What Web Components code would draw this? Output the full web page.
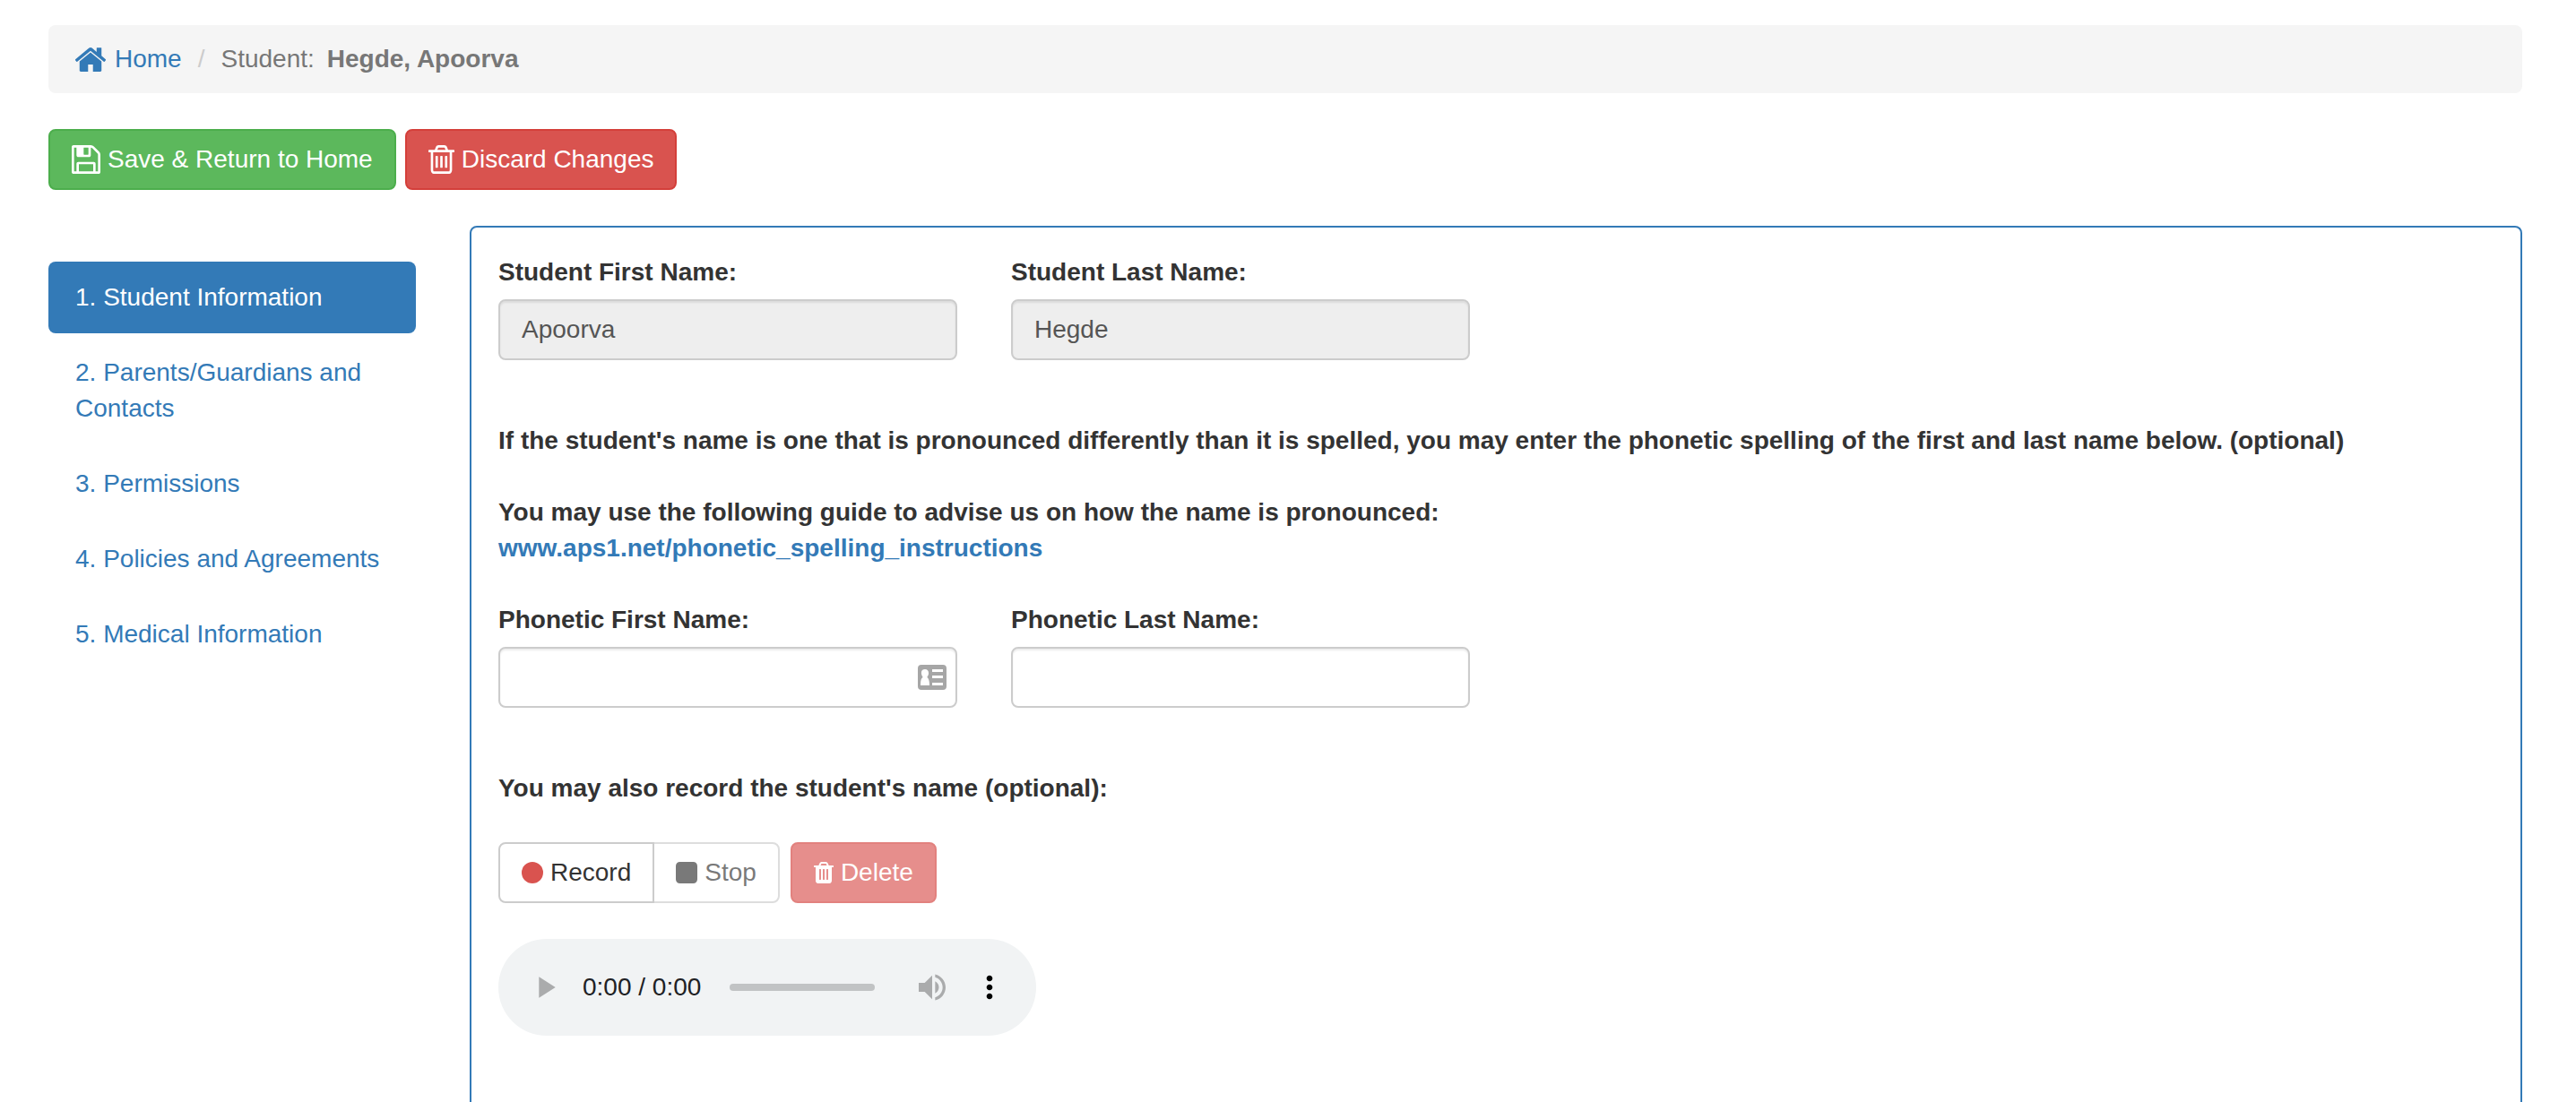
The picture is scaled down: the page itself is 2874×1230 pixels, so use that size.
<!DOCTYPE html>
<html lang="en">
<head>
<meta charset="utf-8">
<meta name="viewport" content="width=device-width, initial-scale=1">
<title>Student Information</title>
<style>
  body {
    margin: 0;
    background: #fff;
    color: #333;
    font: 28px/40px "Liberation Sans", Arial, sans-serif;
  }
</style>
</head>
<body>
<student-page></student-page>

<script>
const icons = {
  home: ['32 250 1600 1286', 'M1408 992v480q0 26-19 45t-45 19h-384v-384h-256v384h-384q-26 0-45-19t-19-45v-480q0-1 .5-3t.5-3l575-474 575 474q1 2 1 6zm223-69l-62 74q-8 9-21 11h-3q-13 0-21-7l-692-577-692 577q-12 8-24 7-13-2-21-11l-62-74q-8-10-7-23.5t11-21.5l719-599q32-26 76-26t76 26l244 204v-195q0-14 9-23t23-9h192q14 0 23 9t9 23v408l219 182q10 8 11 21.5t-7 23.5z'],
  save: ['128 128 1536 1536', 'M512 1536h768v-384h-768v384zm896 0h128v-896q0-14-10-38.5t-20-34.5l-281-281q-10-10-34-20t-39-10v416q0 40-28 68t-68 28h-576q-40 0-68-28t-28-68v-416h-128v1280h128v-416q0-40 28-68t68-28h832q40 0 68 28t28 68v416zm-384-928v-320q0-13-9.5-22.5t-22.5-9.5h-192q-13 0-22.5 9.5t-9.5 22.5v320q0 13 9.5 22.5t22.5 9.5h192q13 0 22.5-9.5t9.5-22.5zm640 32v928q0 40-28 68t-68 28h-1344q-40 0-68-28t-28-68v-1344q0-40 28-68t68-28h928q40 0 88 20t76 48l280 280q28 28 48 76t20 88z'],
  discard: ['192 128 1408 1536', 'M704 736v576q0 14-9 23t-23 9h-64q-14 0-23-9t-9-23v-576q0-14 9-23t23-9h64q14 0 23 9t9 23zm256 0v576q0 14-9 23t-23 9h-64q-14 0-23-9t-9-23v-576q0-14 9-23t23-9h64q14 0 23 9t9 23zm256 0v576q0 14-9 23t-23 9h-64q-14 0-23-9t-9-23v-576q0-14 9-23t23-9h64q14 0 23 9t9 23zm128 724v-948h-896v948q0 22 7 40.5t14.5 27 10.5 8.5h832q3 0 10.5-8.5t14.5-27 7-40.5zm-672-1076h448l-48-117q-7-9-17-11h-317q-10 2-17 11zm928 32v64q0 14-9 23t-23 9h-96v948q0 83-47 143.5t-113 60.5h-832q-66 0-113-58.5t-47-141.5v-952h-96q-14 0-23-9t-9-23v-64q0-14 9-23t23-9h309l70-167q15-37 54-63t79-26h320q40 0 79 26t54 63l70 167h309q14 0 23 9t9 23z'],
  trash: ['192 128 1408 1536', 'M704 1376v-704q0-14-9-23t-23-9h-64q-14 0-23 9t-9 23v704q0 14 9 23t23 9h64q14 0 23-9t9-23zm256 0v-704q0-14-9-23t-23-9h-64q-14 0-23 9t-9 23v704q0 14 9 23t23 9h64q14 0 23-9t9-23zm256 0v-704q0-14-9-23t-23-9h-64q-14 0-23 9t-9 23v704q0 14 9 23t23 9h64q14 0 23-9t9-23zm-544-992h448l-48-117q-7-9-17-11h-317q-10 2-17 11zm928 32v64q0 14-9 23t-23 9h-96v948q0 83-47 143.5t-113 60.5h-832q-66 0-113-58.5t-47-141.5v-952h-96q-14 0-23-9t-9-23v-64q0-14 9-23t23-9h309l70-167q15-37 54-63t79-26h320q40 0 79 26t54 63l70 167h309q14 0 23 9t9 23z'],
  circle: ['0 0 24 24', 'M12 0a12 12 0 0 1 0 24a12 12 0 0 1 0-24z'],
  square: ['0 0 24 24', 'M4.500 0h15A4.500 4.500 0 0 1 24 4.500v15a4.500 4.500 0 0 1-4.500 4.500h-15A4.500 4.500 0 0 1 0 19.500v-15A4.500 4.500 0 0 1 4.500 0z'],
  contact: ['0 0 32 28', 'M4 0h24q4 0 4 4v20q0 4-4 4h-24q-4 0-4-4v-20q0-4 4-4zM16 5v3h12v-3zM16 12v3h12v-3zM16 20v3h12v-3zM8 5c-3 0-4.500 2-4 5 .3 2 1 3 1.700 3.800C3.500 15.500 3 18 3 23h10c0-5-.8-7.500-2.800-9.200C11 13 11.700 12 12 10c.3-3-1-5-4-5z'],
  play: ['0 0 24 24', 'M8 5v14l11-7z'],
  volume: ['0 0 24 24', 'M3 9v6h4l5 5V4L7 9H3zm13.500 3c0-1.770-1.020-3.290-2.500-4.030v8.050c1.480-.73 2.500-2.250 2.500-4.020zM14 3.230v2.060c2.890.86 5 3.540 5 6.710s-2.110 5.850-5 6.710v2.060c4.010-.91 7-4.490 7-8.770s-2.990-7.860-7-8.770z'],
  more: ['0 0 24 24', 'M12 8c1.100 0 2-.9 2-2s-.9-2-2-2-2 .9-2 2 .9 2 2 2zm0 2c-1.100 0-2 .9-2 2s.9 2 2 2 2-.9 2-2-.9-2-2-2zm0 6c-1.100 0-2 .9-2 2s.9 2 2 2 2-.9 2-2-.9-2-2-2z']
};

function define(name, render) {
  customElements.define(name, class extends HTMLElement {
    constructor() {
      super();
      this.attachShadow({ mode: 'open' });
    }
    connectedCallback() {
      this.shadowRoot.innerHTML = render(this);
    }
  });
}

// Attributes: name, w, h (pixels)
define('ui-icon', el => {
  const [box, path] = icons[el.getAttribute('name')];
  const w = el.getAttribute('w'), h = el.getAttribute('h');
  return `
    <style>:host { display: inline-flex; flex: none; } svg { display: block; fill: currentColor; }</style>
    <svg width="${w}" height="${h}" viewBox="${box}" preserveAspectRatio="none" fill-rule="evenodd" aria-hidden="true"><path fill-rule="evenodd" d="${path}"/></svg>`;
});

define('ui-button', el => `
  <style>
    :host { display: inline-flex; }
    button {
      display: inline-flex; align-items: center; gap: 8px;
      box-sizing: border-box; margin: 0; padding: 12px 24px;
      border: 2px solid #ccc; border-radius: 8px;
      background: #fff; color: #333; font: inherit; white-space: nowrap; cursor: pointer;
    }
    button:disabled { opacity: .65; cursor: not-allowed; }
    :host([kind=success]) button { background: #5cb85c; border-color: #4cae4c; color: #fff; }
    :host([kind=danger]) button { background: #d9534f; border-color: #d43f3a; color: #fff; }
    :host([group=first]) { z-index: 1; }
    :host([group=first]) button { border-radius: 8px 0 0 8px; }
    :host([group=last]) { margin-left: -2px; }
    :host([group=last]) button { border-radius: 0 8px 8px 0; }
  </style>
  <button type="button" ${el.hasAttribute('disabled') ? 'disabled' : ''}><slot name="icon"></slot><span><slot></slot></span></button>`);

define('page-breadcrumb', () => `
  <style>
    :host { display: block; }
    ol {
      display: flex; align-items: center; margin: 0; padding: 18px 30px;
      list-style: none; background: #f5f5f5; border-radius: 8px; color: #777;
    }
    li { display: flex; align-items: center; gap: 14px; }
    li + li::before { content: "/"; color: #ccc; padding: 0 4px 0 18px; }
    a { display: flex; align-items: center; gap: 10px; color: #337ab7; text-decoration: none; }
  </style>
  <nav aria-label="Breadcrumb"><ol>
    <li><a href="#home"><ui-icon name="home" w="34" h="27"></ui-icon>Home</a></li>
    <li><span>Student:</span><b>Hegde, Apoorva</b></li>
  </ol></nav>`);

define('step-nav', () => `
  <style>
    :host { display: block; }
    nav { display: flex; flex-direction: column; gap: 4px; }
    a { padding: 20px 30px; border-radius: 8px; color: #337ab7; text-decoration: none; }
    a[aria-current] { background: #337ab7; color: #fff; }
  </style>
  <nav aria-label="Form sections">
    <a href="#student" aria-current="page">1. Student Information</a>
    <a href="#contacts">2. Parents/Guardians and Contacts</a>
    <a href="#permissions">3. Permissions</a>
    <a href="#policies">4. Policies and Agreements</a>
    <a href="#medical">5. Medical Information</a>
  </nav>`);

// Attributes: label, value, readonly, contact (autofill marker)
define('text-field', el => `
  <style>
    :host { display: flex; flex-direction: column; gap: 10px; min-width: 0; }
    label { font-weight: bold; }
    div { position: relative; display: flex; }
    input {
      box-sizing: border-box; width: 100%; margin: 0; padding: 12px 24px;
      border: 2px solid #ccc; border-radius: 8px; background: #fff; color: #555;
      font: inherit; height: 68px; box-shadow: inset 0 2px 2px rgba(0, 0, 0, .075); outline: 0;
    }
    input:read-only { background: #eee; }
    ui-icon { position: absolute; right: 12px; top: 20px; color: #a6a6a6; }
  </style>
  <label for="field">${el.getAttribute('label')}</label>
  <div>
    <input id="field" type="text" value="${el.getAttribute('value') || ''}" ${el.hasAttribute('readonly') ? 'readonly' : ''}>
    ${el.hasAttribute('contact') ? '<ui-icon name="contact" w="32" h="28"></ui-icon>' : ''}
  </div>`);

define('field-row', () => `
  <style>
    :host { display: grid; grid-template-columns: repeat(2, minmax(0, 512px)); gap: 60px; }
  </style>
  <slot></slot>`);

define('audio-player', () => `
  <style>
    :host {
      display: flex; align-items: center; box-sizing: border-box;
      width: 600px; max-width: 100%; height: 108px; padding: 0 32px;
      border-radius: 54px; background: #f1f3f4; color: #000;
    }
    button { display: flex; margin: 0; padding: 0; border: 0; background: none; color: #000; cursor: pointer; }
    button:disabled { color: #aaabac; cursor: default; }
    time { margin: 0 32px 0 22px; color: #202124; white-space: nowrap; }
    input {
      flex: 1; min-width: 0; height: 8px; margin: 0 44px 0 0;
      appearance: none; border-radius: 4px; background: #c1c3c4; opacity: 1;
    }
    input::-webkit-slider-thumb { appearance: none; width: 0; height: 0; }
    .more { margin-left: 24px; }
  </style>
  <button type="button" aria-label="Play" disabled><ui-icon name="play" w="40" h="40"></ui-icon></button>
  <time>0:00 / 0:00</time>
  <input type="range" aria-label="Audio position" min="0" max="1" value="0" disabled>
  <button type="button" aria-label="Mute" disabled><ui-icon name="volume" w="40" h="40"></ui-icon></button>
  <button type="button" class="more" aria-label="More options"><ui-icon name="more" w="40" h="40"></ui-icon></button>`);

define('student-form', () => `
  <style>
    :host {
      display: flex; flex-direction: column; align-items: stretch; gap: 40px; box-sizing: border-box; min-width: 0;
      padding: 30px; border: 2px solid #337ab7; border-bottom: 0; border-radius: 8px 8px 0 0;
    }
    field-row { margin-bottom: 30px; }
    p { margin: 0; font-weight: bold; }
    a { color: #337ab7; text-decoration: none; }
    .record { display: flex; flex-wrap: wrap; gap: 12px; }
    .group { display: flex; }
    .red { color: #d9534f; }
    .gray { color: #333; }
  </style>
  <field-row>
    <text-field label="Student First Name:" value="Apoorva" readonly></text-field>
    <text-field label="Student Last Name:" value="Hegde" readonly></text-field>
  </field-row>
  <p>If the student's name is one that is pronounced differently than it is spelled, you may enter the phonetic spelling of the first and last name below. (optional)</p>
  <p>You may use the following guide to advise us on how the name is pronounced:<br><a href="#guide">www.aps1.net/phonetic_spelling_instructions</a></p>
  <field-row>
    <text-field label="Phonetic First Name:" contact></text-field>
    <text-field label="Phonetic Last Name:"></text-field>
  </field-row>
  <p>You may also record the student's name (optional):</p>
  <div class="record">
    <div class="group">
      <ui-button group="first"><ui-icon slot="icon" class="red" name="circle" w="24" h="24"></ui-icon>Record</ui-button>
      <ui-button group="last" disabled><ui-icon slot="icon" class="gray" name="square" w="24" h="24"></ui-icon>Stop</ui-button>
    </div>
    <ui-button kind="danger" disabled><ui-icon slot="icon" name="trash" w="22" h="24"></ui-icon>Delete</ui-button>
  </div>
  <audio-player></audio-player>`);

define('student-page', () => `
  <style>
    :host {
      display: flex; flex-direction: column; gap: 40px; box-sizing: border-box;
      min-height: 100vh; padding: 28px 60px 0 54px;
    }
    .actions { display: flex; gap: 10px; }
    main { flex: 1; display: grid; grid-template-columns: 410px minmax(0, 1fr); gap: 60px; }
    step-nav { padding-top: 40px; }
  </style>
  <page-breadcrumb></page-breadcrumb>
  <div class="actions">
    <ui-button kind="success"><ui-icon slot="icon" name="save" w="32" h="32"></ui-icon>Save &amp; Return to Home</ui-button>
    <ui-button kind="danger"><ui-icon slot="icon" name="discard" w="29" h="32"></ui-icon>Discard Changes</ui-button>
  </div>
  <main>
    <step-nav></step-nav>
    <student-form></student-form>
  </main>`);
</script>
</body>
</html>
